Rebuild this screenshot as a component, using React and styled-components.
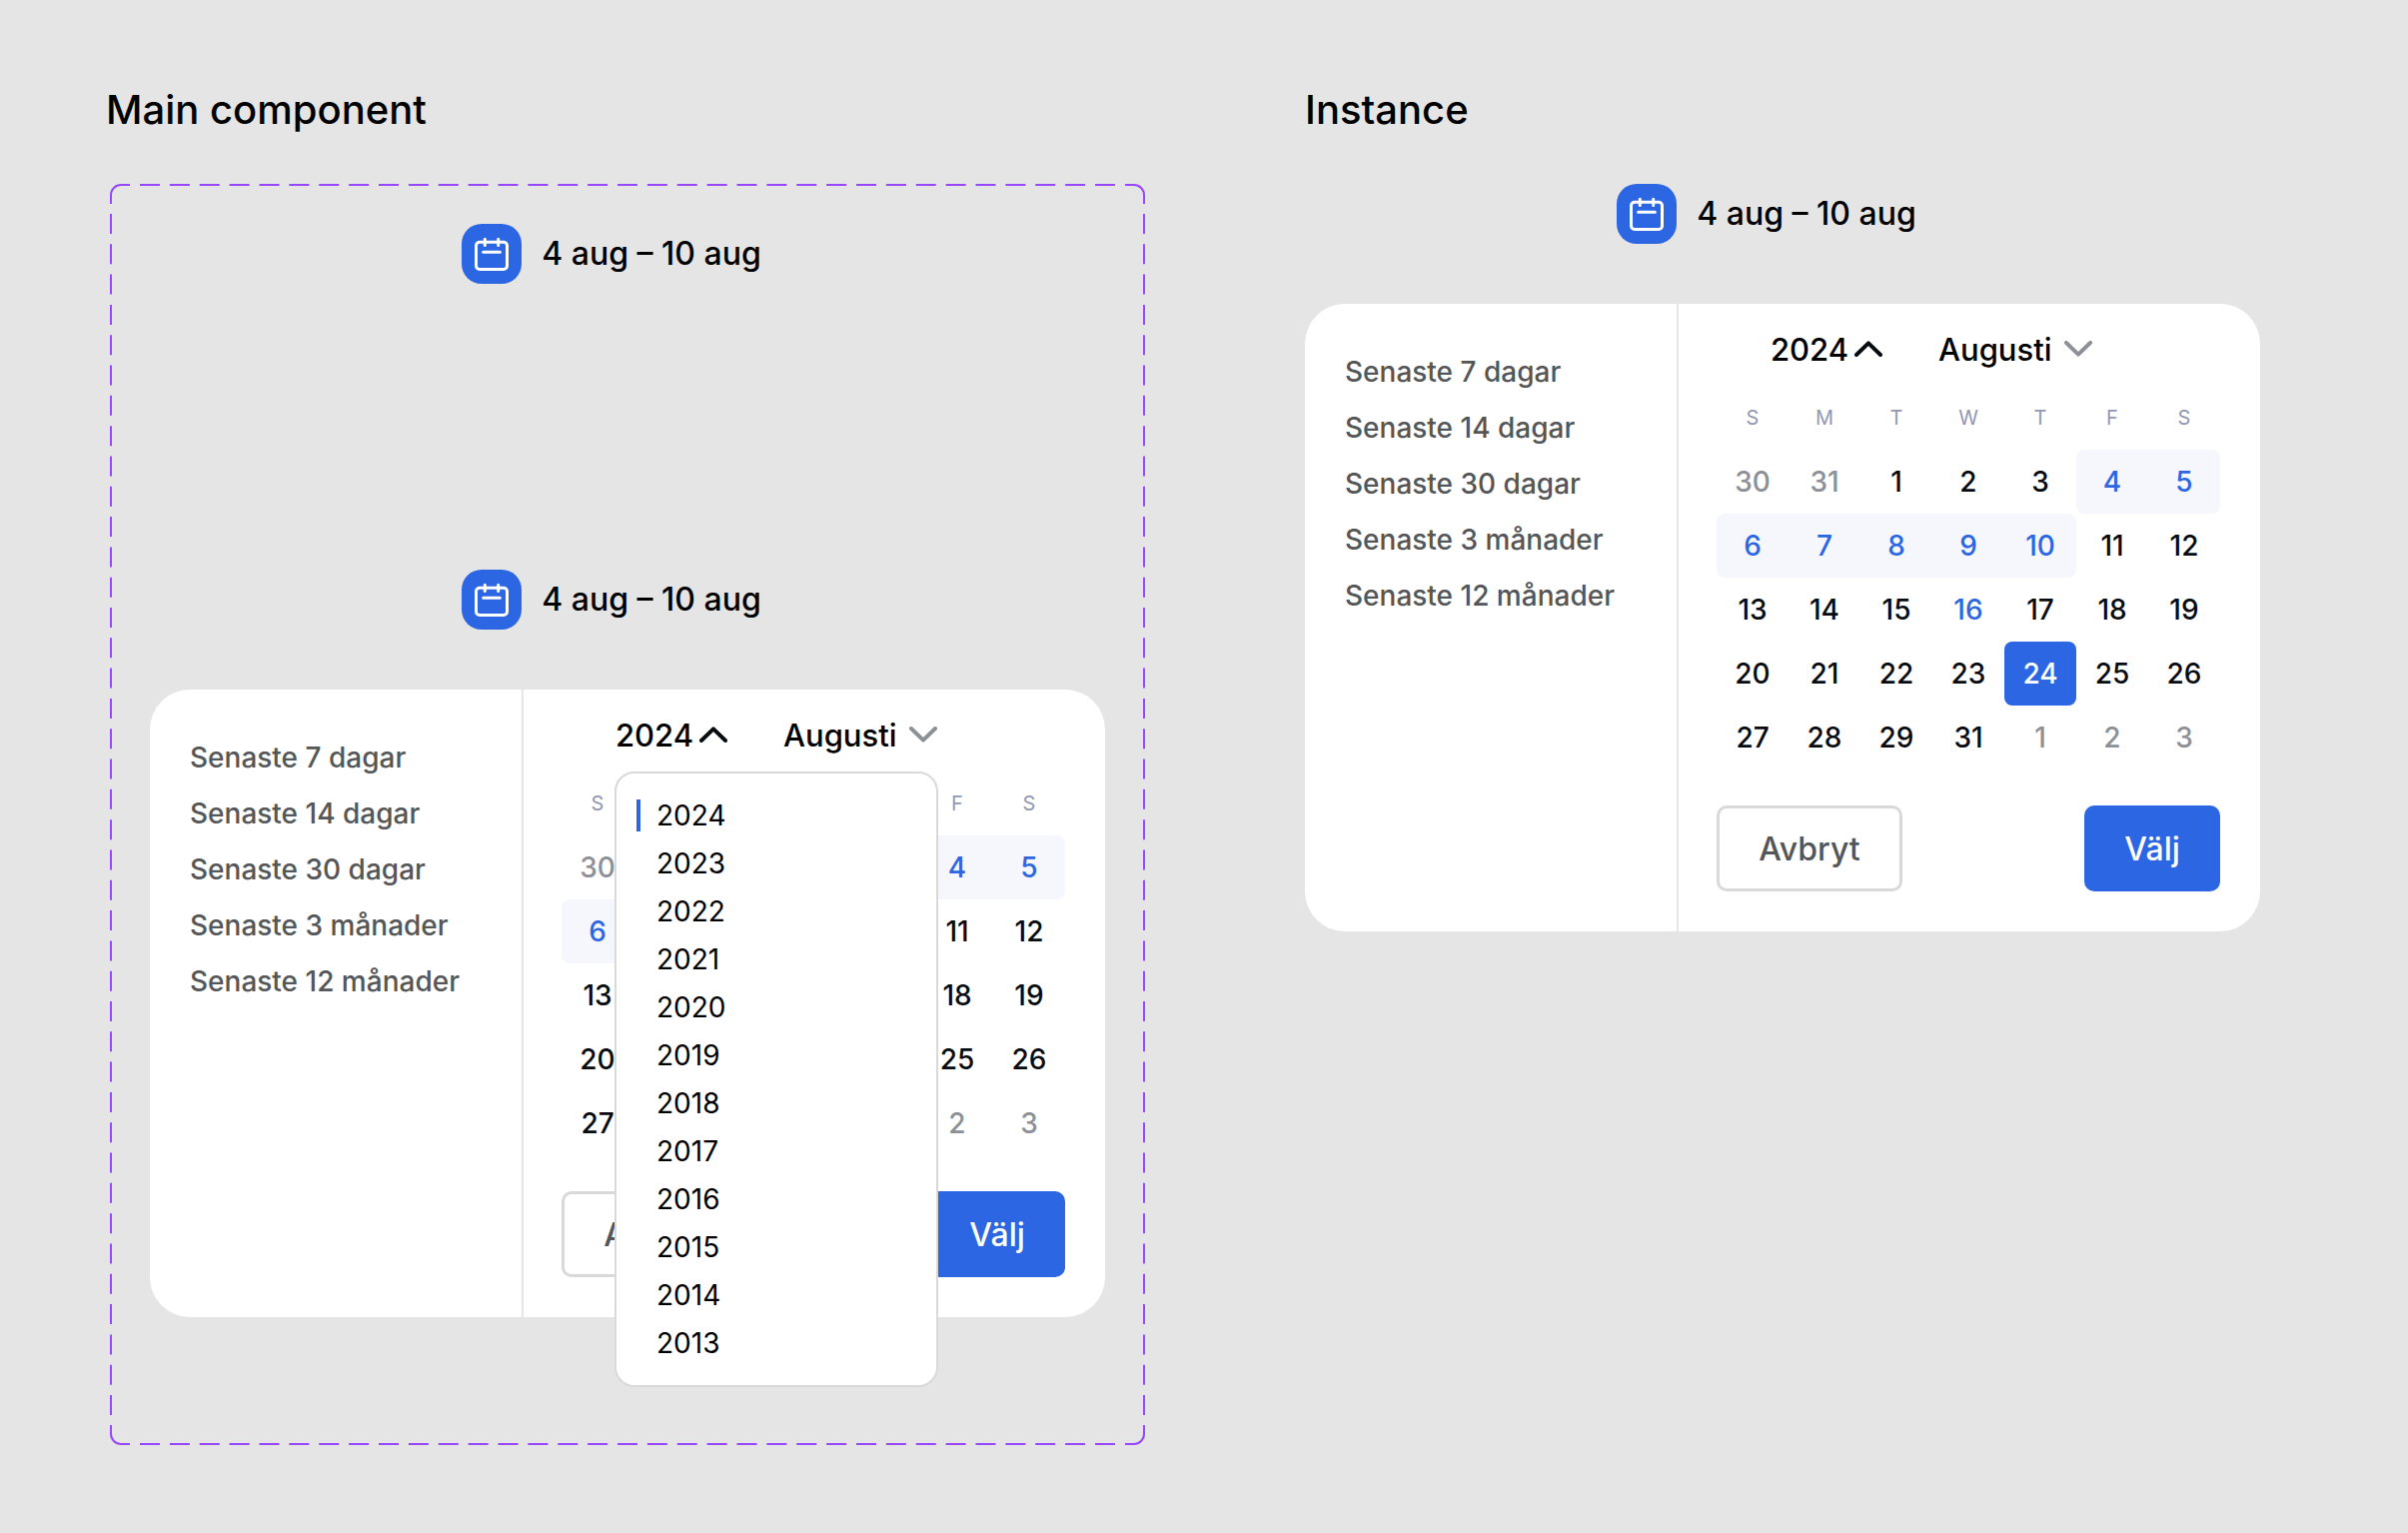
import React from "react";
import styled, { createGlobalStyle, css } from "styled-components";

const color = {
  page: "#e5e5e5",
  card: "#ffffff",
  ink: "#000000",
  day: "#080c10",
  preset: "#545658",
  muted: "#8d9097",
  weekday: "#9297b6",
  line: "#e6e6e6",
  outline: "#d9d9d9",
  blue: "#2d66e2",
  range: "#f5f7fd",
  purple: "#9747ff",
};

const GlobalStyle = createGlobalStyle`
  *, *::before, *::after { box-sizing: border-box; }
  body {
    margin: 0;
    background: ${color.page};
    color: ${color.ink};
    font-family: Inter, "Liberation Sans", sans-serif;
    font-weight: 500;
  }
  button {
    margin: 0;
    padding: 0;
    border: 0;
    background: none;
    color: inherit;
    font: inherit;
    cursor: pointer;
  }
`;

const Board = styled.main`
  display: grid;
  grid-template-columns: minmax(0, 1040px) minmax(0, 956px);
  column-gap: 160px;
  align-items: start;
  padding: 86px 106px;
`;

const Column = styled.section`
  display: flex;
  flex-direction: column;
`;

const Title = styled.h2`
  margin: 0 0 50px;
  font-size: 40px;
  line-height: 48px;
  font-weight: 500;
`;

const VariantFrame = styled.div`
  position: relative;
  display: flex;
  flex-direction: column;
  gap: 286px;
  margin-left: 4px;
  padding: 40px 40px 128px;
`;

const DashedOutline = styled.svg`
  position: absolute;
  inset: 0;
  width: 100%;
  height: 100%;
  pointer-events: none;
`;

const Picker = styled.div`
  display: flex;
  flex-direction: column;
  align-items: center;
  gap: 60px;
`;

const Trigger = styled.button`
  display: flex;
  align-items: center;
  gap: 20px;
  padding-right: 32px;
  font-size: 32px;
  line-height: 40px;
  white-space: nowrap;
`;

const TriggerIcon = styled.span`
  display: block;
  width: 60px;
  height: 60px;
  border-radius: 20px;
  background: ${color.blue};
`;

const Card = styled.div`
  display: flex;
  width: 100%;
  border-radius: 40px;
  background: ${color.card};
`;

const Presets = styled.ul`
  flex: 1;
  margin: 0;
  padding: 40px;
  list-style: none;
`;

const Preset = styled.button`
  display: block;
  width: 100%;
  height: 56px;
  color: ${color.preset};
  font-size: 28px;
  text-align: left;
  white-space: nowrap;
`;

const Calendar = styled.div`
  width: 584px;
  padding: 24px 40px 40px 38px;
  border-left: 2px solid ${color.line};
`;

const CalendarHeader = styled.div`
  position: relative;
  display: flex;
  gap: 56px;
  height: 42px;
  margin-bottom: 16px;
  padding-left: 54px;
`;

const PeriodButton = styled.button`
  display: flex;
  align-items: center;
  justify-content: space-between;
  width: ${(p) => p.$width}px;
  font-size: 31px;
`;

const YearList = styled.ul`
  position: absolute;
  top: calc(100% + 16px);
  left: 53px;
  z-index: 1;
  width: 324px;
  margin: 0;
  padding: 18px 20px;
  border: 2px solid ${color.outline};
  border-radius: 20px;
  background: ${color.card};
  list-style: none;
`;

const YearOption = styled.li`
  display: flex;
  align-items: center;
  gap: 16px;
  height: 48px;
  font-size: 28px;
  font-weight: 400;

  &::before {
    content: "";
    width: 4px;
    height: 32px;
    background: ${(p) => (p.$selected ? color.blue : "transparent")};
  }
`;

const Month = styled.table`
  width: 100%;
  table-layout: fixed;
  border-collapse: collapse;
`;

const Weekday = styled.th`
  height: 64px;
  padding: 0;
  color: ${color.weekday};
  font-size: 20px;
  font-weight: 400;
`;

const DayCell = styled.td`
  height: 64px;
  padding: 0;
`;

const dayStyles = {
  outside: css`
    color: ${color.muted};
  `,
  today: css`
    color: ${color.blue};
  `,
  range: css`
    background: ${color.range};
    color: ${color.blue};
  `,
  rangeStart: css`
    border-radius: 8px 0 0 8px;
    background: ${color.range};
    color: ${color.blue};
  `,
  rangeEnd: css`
    border-radius: 0 8px 8px 0;
    background: ${color.range};
    color: ${color.blue};
  `,
  selected: css`
    border-radius: 8px;
    background: ${color.blue};
    color: #ffffff;
  `,
};

const Day = styled.button`
  display: block;
  width: 100%;
  height: 64px;
  color: ${color.day};
  font-size: 28px;
  ${(p) => dayStyles[p.$kind]}
`;

const Actions = styled.div`
  display: flex;
  justify-content: space-between;
  margin-top: 36px;
`;

const ActionButton = styled.button`
  width: ${(p) => (p.$primary ? 136 : 186)}px;
  height: 86px;
  border: 3px solid ${(p) => (p.$primary ? color.blue : color.outline)};
  border-radius: 10px;
  background: ${(p) => (p.$primary ? color.blue : color.card)};
  color: ${(p) => (p.$primary ? "#ffffff" : color.preset)};
  font-size: 32px;
`;

const PRESETS = [
  "Senaste 7 dagar",
  "Senaste 14 dagar",
  "Senaste 30 dagar",
  "Senaste 3 månader",
  "Senaste 12 månader",
];

const YEARS = [2024, 2023, 2022, 2021, 2020, 2019, 2018, 2017, 2016, 2015, 2014, 2013];

const WEEKDAYS = ["S", "M", "T", "W", "T", "F", "S"];

const WEEKS = [
  [[30, "outside"], [31, "outside"], [1], [2], [3], [4, "rangeStart"], [5, "rangeEnd"]],
  [[6, "rangeStart"], [7, "range"], [8, "range"], [9, "range"], [10, "rangeEnd"], [11], [12]],
  [[13], [14], [15], [16, "today"], [17], [18], [19]],
  [[20], [21], [22], [23], [24, "selected"], [25], [26]],
  [[27], [28], [29], [31], [1, "outside"], [2, "outside"], [3, "outside"]],
];

function Outline() {
  return (
    <DashedOutline viewBox="0 0 1036 1262" preserveAspectRatio="none" aria-hidden="true">
      <g fill="none" stroke={color.purple} strokeWidth="2">
        <path d="M1 20V11A10 10 0 0 1 11 1H20" />
        <path d="M1016 1H1025A10 10 0 0 1 1035 11V20" />
        <path d="M1035 1242V1251A10 10 0 0 1 1025 1261H1016" />
        <path d="M20 1261H11A10 10 0 0 1 1 1251V1242" />
        <path d="M30 1H1006M30 1261H1006" strokeDasharray="20 9.875" />
        <path d="M1 30V1232M1035 30V1232" strokeDasharray="20 10.308" />
      </g>
    </DashedOutline>
  );
}

function CalendarIcon() {
  return (
    <svg width="60" height="60" viewBox="0 0 60 60" fill="none" stroke="#fff" strokeWidth="3" strokeLinecap="round" aria-hidden="true">
      <rect x="14.5" y="18.3" width="31" height="27.2" rx="3.5" />
      <path d="M23.3 15.2V21.6M36.7 15.2V21.6M21.6 28.2H38.4" />
    </svg>
  );
}

function Chevron({ up }) {
  return (
    <svg width="28" height="16" viewBox="0 0 28 16" fill="none" stroke={up ? color.day : color.muted} strokeWidth="4" strokeLinecap="round" strokeLinejoin="round" aria-hidden="true">
      <path d={up ? "M2 14L14 2.4L26 14" : "M2 2L14 13.6L26 2"} />
    </svg>
  );
}

function DateTrigger() {
  return (
    <Trigger type="button">
      <TriggerIcon>
        <CalendarIcon />
      </TriggerIcon>
      4 aug – 10 aug
    </Trigger>
  );
}

function DatePicker({ yearsOpen }) {
  return (
    <Picker>
      <DateTrigger />
      <Card>
        <Presets>
          {PRESETS.map((label) => (
            <li key={label}>
              <Preset type="button">{label}</Preset>
            </li>
          ))}
        </Presets>
        <Calendar>
          <CalendarHeader>
            <PeriodButton type="button" $width={112} aria-haspopup="listbox" aria-expanded={yearsOpen}>
              2024
              <Chevron up />
            </PeriodButton>
            <PeriodButton type="button" $width={154} aria-haspopup="listbox" aria-expanded={false}>
              Augusti
              <Chevron />
            </PeriodButton>
            {yearsOpen && (
              <YearList role="listbox" aria-label="År">
                {YEARS.map((year) => (
                  <YearOption key={year} role="option" aria-selected={year === 2024} $selected={year === 2024}>
                    {year}
                  </YearOption>
                ))}
              </YearList>
            )}
          </CalendarHeader>
          <Month>
            <thead>
              <tr>
                {WEEKDAYS.map((name, i) => (
                  <Weekday key={i} scope="col">{name}</Weekday>
                ))}
              </tr>
            </thead>
            <tbody>
              {WEEKS.map((week, w) => (
                <tr key={w}>
                  {week.map(([day, kind], d) => (
                    <DayCell key={d}>
                      <Day type="button" $kind={kind}>{day}</Day>
                    </DayCell>
                  ))}
                </tr>
              ))}
            </tbody>
          </Month>
          <Actions>
            <ActionButton type="button">Avbryt</ActionButton>
            <ActionButton type="button" $primary>Välj</ActionButton>
          </Actions>
        </Calendar>
      </Card>
    </Picker>
  );
}

export default function App() {
  return (
    <>
      <GlobalStyle />
      <Board>
        <Column>
          <Title>Main component</Title>
          <VariantFrame>
            <Outline />
            <Picker>
              <DateTrigger />
            </Picker>
            <DatePicker yearsOpen />
          </VariantFrame>
        </Column>
        <Column>
          <Title>Instance</Title>
          <DatePicker yearsOpen={false} />
        </Column>
      </Board>
    </>
  );
}
